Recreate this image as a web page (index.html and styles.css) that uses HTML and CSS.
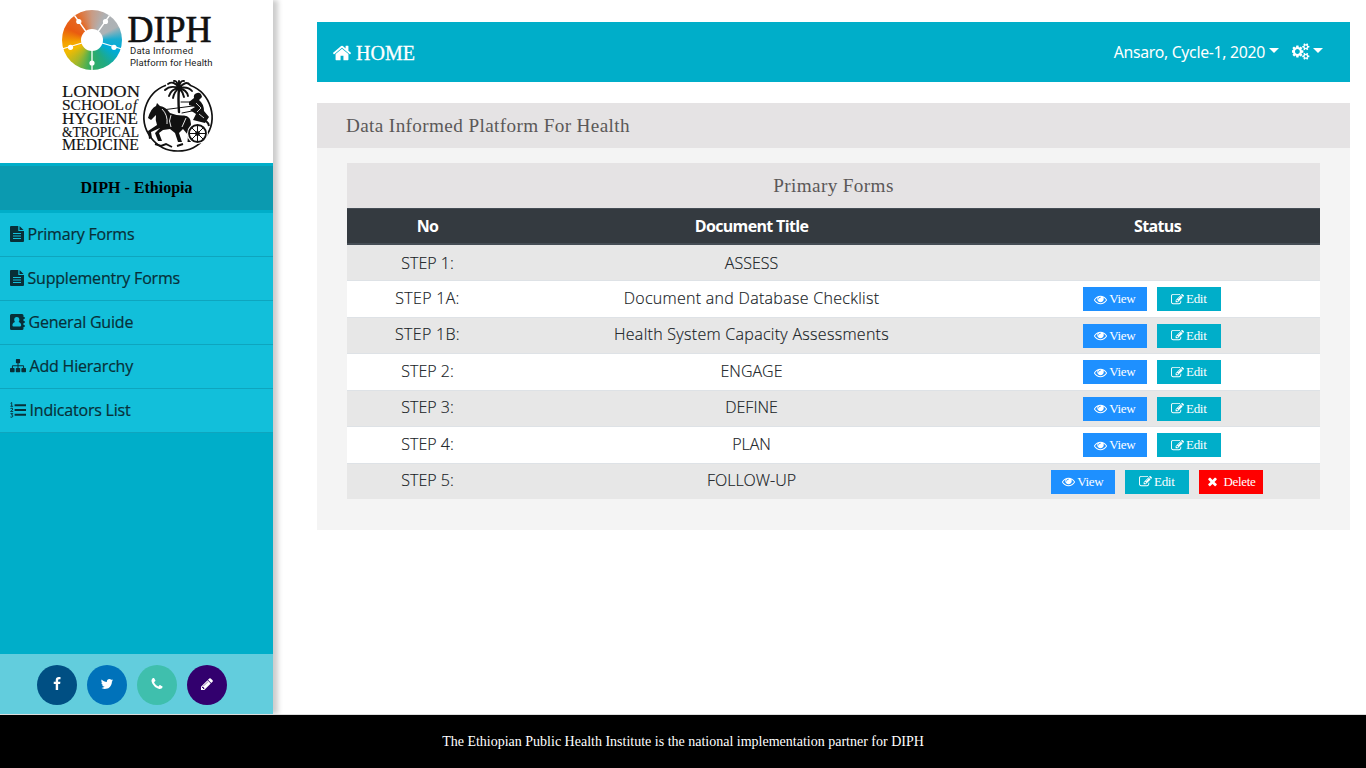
FILE: index.html
```
<!DOCTYPE html>
<html lang="en">
<head>
<meta charset="utf-8">
<title>DIPH - Ethiopia</title>
<link rel="stylesheet" href="styles.css">
</head>
<body>
<svg class="defs" width="0" height="0">
  <symbol id="eye" viewBox="0 0 1792 1792"><path d="M1664 960q-152-236-381-353 61 104 61 225 0 185-131.5 316.5t-316.5 131.5-316.5-131.5-131.5-316.5q0-121 61-225-229 117-381 353 133 205 333.5 326.5t434.5 121.5 434.5-121.5 333.5-326.5zm-720-384q0-20-14-34t-34-14q-125 0-214.5 89.5t-89.5 214.5q0 20 14 34t34 14 34-14 14-34q0-86 61-147t147-61q20 0 34-14t14-34zm848 384q0 34-20 69-140 230-376.5 368.5t-499.5 138.5-499.5-139-376.5-368q-20-35-20-69t20-69q140-229 376.5-368t499.5-139 499.5 139 376.5 368q20 35 20 69z"/></symbol>
  <symbol id="edit" viewBox="0 0 1792 1792"><path d="M888 1184l116-116-152-152-116 116v56h96v96h56zm440-720q-16-16-33 1l-350 350q-17 17-1 33t33-1l350-350q17-17 1-33zm80 594v190q0 119-84.5 203.5t-203.5 84.5h-832q-119 0-203.5-84.5t-84.5-203.5v-832q0-119 84.5-203.5t203.5-84.5h832q63 0 117 25 15 7 18 23 3 17-9 29l-49 49q-14 14-32 8-23-6-45-6h-832q-66 0-113 47t-47 113v832q0 66 47 113t113 47h832q66 0 113-47t47-113v-126q0-13 9-22l64-64q15-15 35-7t20 29zm-96-738l288 288-672 672h-288v-288zm444 132l-92 92-288-288 92-92q28-28 68-28t68 28l152 152q28 28 28 68t-28 68z"/></symbol>
  <symbol id="times" viewBox="0 0 1792 1792"><path d="M1490 1322q0 40-28 68l-136 136q-28 28-68 28t-68-28l-294-294-294 294q-28 28-68 28t-68-28l-136-136q-28-28-28-68t28-68l294-294-294-294q-28-28-28-68t28-68l136-136q28-28 68-28t68 28l294 294 294-294q28-28 68-28t68 28l136 136q28 28 28 68t-28 68l-294 294 294 294q28 28 28 68z"/></symbol>
  <symbol id="home" viewBox="0 0 1792 1792"><path d="M1472 992v480q0 26-19 45t-45 19h-384v-384h-256v384h-384q-26 0-45-19t-19-45v-480q0-1 .5-3t.5-3l575-474 575 474q1 2 1 6zm223-69l-62 74q-8 9-21 11h-3q-13 0-21-7l-692-577-692 577q-12 8-24 7-13-2-21-11l-62-74q-8-10-7-23.5t11-21.5l719-599q32-26 76-26t76 26l244 204v-195q0-14 9-23t23-9h192q14 0 23 9t9 23v408l219 182q10 8 11 21.5t-7 23.5z"/></symbol>
  <symbol id="facebook" viewBox="0 0 1792 1792"><path d="M1343 12v264h-157q-86 0-116 36t-30 108v189h293l-39 296h-254v759h-306v-759h-255v-296h255v-218q0-186 104-288.5t277-102.5q147 0 228 12z"/></symbol>
  <symbol id="twitter" viewBox="0 0 1792 1792"><path d="M1684 408q-67 98-162 167 1 14 1 42 0 130-38 259.5t-115.5 248.5-184.5 210.5-258 146-323 54.5q-271 0-496-145 35 4 78 4 225 0 401-138-105-2-188-64.5t-114-159.5q33 5 61 5 43 0 85-11-112-23-185.5-111.5t-73.5-205.5v-4q68 38 146 41-66-44-105-115t-39-154q0-88 44-163 121 149 294.5 238.5t371.5 99.5q-8-38-8-74 0-134 94.5-228.5t228.5-94.5q140 0 236 102 109-21 205-78-37 115-142 178 93-10 186-50z"/></symbol>
  <symbol id="phone" viewBox="0 0 1792 1792"><path d="M1600 1240q0 27-10 70.5t-21 68.5q-21 50-122 106-94 51-186 51-27 0-53-3.5t-57.5-12.5-47-14.5-55.5-20.5-49-18q-98-35-175-83-127-79-264-216t-216-264q-48-77-83-175-3-9-18-49t-20.5-55.5-14.5-47-12.5-57.5-3.5-53q0-92 51-186 56-101 106-122 25-11 68.5-21t70.5-10q14 0 21 3 18 6 53 76 11 19 30 54t35 63.5 31 53.5q3 4 17.5 25t21.5 35.5 7 28.5q0 20-28.5 50t-62 55-62 53-28.5 46q0 9 5 22.5t8.5 20.5 14 24 11.5 19q76 137 174 235t235 174q2 1 19 11.5t24 14 20.5 8.5 22.5 5q18 0 46-28.5t53-62 55-62 50-28.5q14 0 28.5 7t35.5 21.5 25 17.5q25 15 53.5 31t63.5 35 54 30q70 35 76 53 3 7 3 21z"/></symbol>
  <symbol id="pencil" viewBox="0 0 1792 1792"><path d="M491 1536l91-91-235-235-91 91v107h128v128h107zm523-928q0-22-22-22-10 0-17 7l-542 542q-7 7-7 17 0 22 22 22 10 0 17-7l542-542q7-7 7-17zm-54-192l416 416-832 832h-416v-416zm683 96q0 53-37 90l-166 166-416-416 166-165q36-38 90-38 53 0 91 38l235 234q37 39 37 91z"/></symbol>
  <symbol id="cogs" viewBox="0 0 1920 1792"><path d="M832 896q0-106-75-181t-181-75-181 75-75 181 75 181 181 75 181-75 75-181zm768 512q0-52-38-90t-90-38-90 38-38 90q0 53 37.5 90.5t90.500 37.500 90.500-37.500 37.500-90.500zm0-1024q0-52-38-90t-90-38-90 38-38 90q0 53 37.500 90.500t90.500 37.500 90.500-37.500 37.500-90.500zm-384 421v185q0 10-7 19.500t-16 10.500l-155 24q-11 35-32 76 34 48 90 115 7 11 7 20 0 12-7 19-23 30-82.500 89.500t-78.500 59.500q-11 0-21-7l-115-90q-37 19-77 31-11 108-23 155-7 24-30 24h-186q-11 0-20-7.500t-10-17.500l-23-153q-34-10-75-31l-118 89q-7 7-20 7-11 0-21-8-144-133-144-160 0-9 7-19 10-14 41-53t47-61q-23-44-35-82l-152-24q-10-1-17-9.500t-7-19.500v-185q0-10 7-19.500t16-10.500l155-24q11-35 32-76-34-48-90-115-7-11-7-20 0-12 7-20 22-30 82-89t79-59q11 0 21 7l115 90q34-18 77-32 11-108 23-154 7-24 30-24h186q11 0 20 7.500t10 17.500l23 153q34 10 75 31l118-89q8-7 20-7 11 0 21 8 144 133 144 160 0 8-7 19-12 16-42 54t-45 60q23 48 34 82l152 23q10 2 17 10.500t7 19.500zm640 533v140q0 16-149 31-12 27-30 52 51 113 51 138 0 4-4 7-122 71-124 71-8 0-46-47t-52-68q-20 2-30 2t-30-2q-14 21-52 68t-46 47q-2 0-124-71-4-3-4-7 0-25 51-138-18-25-30-52-149-15-149-31v-140q0-16 149-31 13-29 30-52-51-113-51-138 0-4 4-7 4-2 35-20t59-34 30-16q8 0 46 46.500t52 67.500q20-2 30-2t30 2q51-71 92-112l6-2q4 0 124 70 4 3 4 7 0 25-51 138 17 23 30 52 149 15 149 31zm0-1024v140q0 16-149 31-12 27-30 52 51 113 51 138 0 4-4 7-122 71-124 71-8 0-46-47t-52-68q-20 2-30 2t-30-2q-14 21-52 68t-46 47q-2 0-124-71-4-3-4-7 0-25 51-138-18-25-30-52-149-15-149-31v-140q0-16 149-31 13-29 30-52-51-113-51-138 0-4 4-7 4-2 35-20t59-34 30-16q8 0 46 46.500t52 67.500q20-2 30-2t30 2q51-71 92-112l6-2q4 0 124 70 4 3 4 7 0 25-51 138 17 23 30 52 149 15 149 31z"/></symbol>
  <symbol id="file" viewBox="0 0 14 16"><path fill-rule="evenodd" d="M1 0H8.300V5.100H14V15q0 1-1 1H1q-1 0-1-1V1Q0 0 1 0zM9.500.2q.5.200.8.500l3 3q.3.300.4.300H9.500zM3 7v1h8V7zM3 9.500v1h8v-1zM3 12v1h8v-1z"/></symbol>
  <symbol id="book" viewBox="0 0 15 16"><path fill-rule="evenodd" d="M1.500 0h10.500q1.500 0 1.500 1.500V3h1.200v2h-1.200v2h1.200v2h-1.200v2h1.200v2h-1.200v1.500Q13.500 16 12 16H1.500Q0 16 0 14.500v-13Q0 0 1.500 0zM6.800 3C5 3 4.200 4.200 4.200 5.700q0 1.400.8 2.300C3.300 8.300 2.400 9.700 2.400 11.300q0 1.300 1.200 1.300h6.400q1.200 0 1.200-1.300c0-1.600-.9-3-2.600-3.300q.8-.9.8-2.300C9.400 4.200 8.600 3 6.800 3z"/></symbol>
  <symbol id="sitemap" viewBox="0 0 16 14"><path d="M6.600 0h2.800q.7 0 .7.700v2.800q0 .7-.7.700h-.9v2H13q1.100 0 1.100 1.100v1.800h1.200q.7 0 .7.700v2.800q0 .7-.7.700h-3.200q-.7 0-.7-.7V9.800q0-.7.7-.7h1V7.200H8.500v1.900h1q.7 0 .7.700v2.800q0 .7-.7.700h-3q-.7 0-.7-.7V9.800q0-.7.7-.7h1V7.200H2.900v1.900h1q.7 0 .7.700v2.800q0 .7-.7.700H.7q-.7 0-.7-.7V9.800q0-.7.700-.7h1.200V7.300q0-1.100 1.100-1.100h4.500v-2h-.9q-.7 0-.7-.7V.7q0-.7.700-.7z"/></symbol>
  <symbol id="list" viewBox="0 0 16 16"><path d="M4.600 2.200H16v2H4.600zm0 4.800H16v2H4.600zm0 4.800H16v2H4.600z"/><path fill="none" stroke="currentColor" stroke-width=".9" d="M.6 1.300 1.700.5v3.700M.4 4.300h2.700M.5 6.500q2.300-1 2.300.5Q2.800 7.600.6 9.600h2.600M.5 11.600h2.300L1.500 13q1.500 0 1.400 1.100-.3 1.800-2.500.9"/></symbol>
</svg>

<div class="shell">
  <aside class="sidebar">
    <div class="logos">
      <svg viewBox="0 0 175 160" width="175" height="160">
        <foreignObject x="12" y="10" width="60" height="60"><div class="wheel"></div></foreignObject>
        <g stroke="#fff" stroke-width="1.300" fill="#fff">
          <path d="M42 40V70M42 40 12 49M42 40 72 49M42 40 24.500 15.500M42 40 59.500 15.500"/>
          <g stroke="none"><circle cx="42" cy="40" r="11"/><circle cx="42" cy="63" r="2.600"/><circle cx="20.500" cy="47.300" r="2.600"/><circle cx="64" cy="47.300" r="2.600"/><circle cx="28.800" cy="21.500" r="2.600"/><circle cx="55.500" cy="21.500" r="2.600"/></g>
        </g>
        <text x="77.500" y="41.500" class="serif diph" font-size="38" textLength="84" lengthAdjust="spacingAndGlyphs">DIPH</text>
        <text x="80" y="54" class="sans" font-size="9.500" textLength="63">Data Informed</text>
        <text x="80" y="66" class="sans" font-size="9.500" textLength="82.500">Platform for Health</text>
        <g class="serif">
          <text x="12" y="97" font-size="16" textLength="78" lengthAdjust="spacingAndGlyphs">LONDON</text>
          <text x="12" y="110" font-size="15" textLength="62" lengthAdjust="spacingAndGlyphs">SCHOOL</text>
          <text x="75" y="110" font-size="14" font-style="italic" textLength="12">of</text>
          <text x="12" y="124" font-size="16.500" textLength="76" lengthAdjust="spacingAndGlyphs">HYGIENE</text>
          <text x="12" y="137" font-size="14.500" textLength="77" lengthAdjust="spacingAndGlyphs">&amp;TROPICAL</text>
          <text x="12" y="150" font-size="16" textLength="77" lengthAdjust="spacingAndGlyphs">MEDICINE</text>
        </g>
        <path d="M140 85.200A34 34 0 1 1 116 85.200" fill="none" stroke="#111" stroke-width="1.700"/>
        <g fill="none" stroke="#111" stroke-width="1.900" stroke-linecap="round">
          <path d="M129 88Q124 80 118 84M129 88Q120 85 115 90M129 88Q121 89 119 96M129 88Q124 92 123 98M129 88Q127 80 124 81M129 88Q130 80 134 81M129 88Q136 80 140 85M129 88Q138 86 142 91M129 88Q137 90 138 96M129 88Q133 92 134 97M129 88V81"/>
          <path stroke-width="2.400" d="M129 89Q128 98 129 112"/>
          <path stroke-width="1" d="M131 102H142M112 110 143 106M132 113 147 110"/>
        </g>
        <path fill="#111" d="M98 118Q101 108 106 106L107 103 110 106Q116 107 120 113Q128 116 134 115.500Q141 116 141 124L140 131 142 134 141 142H137.500L138 135 133 129 129 133 132 142H128L125 133 120 129 113 130 109 133 112 141H108L105 133 110 128 101 132 102 138 99 139 98 131 107 125Q105 120 106 115L101 120Z"/>
        <path fill="none" stroke="#fff" stroke-width=".9" d="M112 109Q118 115 117 124M121 115Q118 121 121 127M136 118 132 127"/>
        <path fill="#111" d="M139 102 144 98Q143 94 147 93T152 97L149 100Q154 104 154 111L159 117 155 123 143 120 146 114 140 110 145 107 139 105Z"/>
        <path fill="none" stroke="#fff" stroke-width=".8" d="M146 103 151 108 147 112M149 114 154 118"/>
        <g stroke="#111" fill="none"><circle cx="147.500" cy="133.500" r="8" stroke="#fff" stroke-width="5"/><circle cx="147.500" cy="133.500" r="8.500" stroke-width="1.800"/><circle cx="147.500" cy="133.500" r="2"/><path d="M139 133.500H156M147.500 125V142M141.500 127.500 153.500 139.500M153.500 127.500 141.500 139.500" stroke-width="1"/><path d="M105 144 111 146 116 144 122 147M127 146 133 144M151 120Q158 120 159 126" stroke-width="1.900"/></g>
      </svg>
    </div>
    <div class="country">DIPH - Ethiopia</div>
    <nav class="menu">
      <a><svg width="14" height="16"><use href="#file"/></svg><span>Primary Forms</span></a>
      <a><svg width="14" height="16"><use href="#file"/></svg><span>Supplementry Forms</span></a>
      <a><svg width="15" height="16"><use href="#book"/></svg><span>General Guide</span></a>
      <a><svg width="16" height="14"><use href="#sitemap"/></svg><span>Add Hierarchy</span></a>
      <a><svg width="16" height="16"><use href="#list"/></svg><span>Indicators List</span></a>
    </nav>
    <div class="social">
      <a class="fb"><svg width="14" height="14"><use href="#facebook"/></svg></a>
      <a class="tw"><svg width="14" height="14"><use href="#twitter"/></svg></a>
      <a class="ph"><svg width="14" height="14"><use href="#phone"/></svg></a>
      <a class="pn"><svg width="14" height="14"><use href="#pencil"/></svg></a>
    </div>
  </aside>

  <main class="main">
    <header class="topbar">
      <div class="home"><svg width="20" height="20"><use href="#home"/></svg><span>HOME</span></div>
      <div class="tools">
        <span class="cycle">Ansaro, Cycle-1, 2020</span><i class="caret"></i>
        <svg class="gear" width="18" height="17"><use href="#cogs"/></svg><i class="caret caret-gear"></i>
      </div>
    </header>
    <section class="panel">
      <h1 class="panel-title">Data Informed Platform For Health</h1>
      <div class="panel-body">
        <h2 class="form-title">Primary Forms</h2>
        <div class="table">
          <div class="row head"><span>No</span><span>Document Title</span><span>Status</span></div>
          <div class="row first"><span>STEP 1:</span><span>ASSESS</span><span></span></div>
          <div class="row"><span class="sub">STEP 1A:</span><span class="long">Document and Database Checklist</span><div class="actions"><a class="btn view"><svg width="13" height="13"><use href="#eye"/></svg>View</a><a class="btn edit"><svg width="13" height="13"><use href="#edit"/></svg>Edit</a></div></div>
          <div class="row"><span class="sub">STEP 1B:</span><span class="long">Health System Capacity Assessments</span><div class="actions"><a class="btn view"><svg width="13" height="13"><use href="#eye"/></svg>View</a><a class="btn edit"><svg width="13" height="13"><use href="#edit"/></svg>Edit</a></div></div>
          <div class="row"><span>STEP 2:</span><span>ENGAGE</span><div class="actions"><a class="btn view"><svg width="13" height="13"><use href="#eye"/></svg>View</a><a class="btn edit"><svg width="13" height="13"><use href="#edit"/></svg>Edit</a></div></div>
          <div class="row"><span>STEP 3:</span><span>DEFINE</span><div class="actions"><a class="btn view"><svg width="13" height="13"><use href="#eye"/></svg>View</a><a class="btn edit"><svg width="13" height="13"><use href="#edit"/></svg>Edit</a></div></div>
          <div class="row"><span>STEP 4:</span><span>PLAN</span><div class="actions"><a class="btn view"><svg width="13" height="13"><use href="#eye"/></svg>View</a><a class="btn edit"><svg width="13" height="13"><use href="#edit"/></svg>Edit</a></div></div>
          <div class="row"><span>STEP 5:</span><span>FOLLOW-UP</span><div class="actions wide"><a class="btn view"><svg width="13" height="13"><use href="#eye"/></svg>View</a><a class="btn edit"><svg width="13" height="13"><use href="#edit"/></svg>Edit</a><a class="btn delete"><svg width="13" height="13"><use href="#times"/></svg>Delete</a></div></div>
        </div>
      </div>
    </section>
  </main>
</div>
<footer class="footer">The Ethiopian Public Health Institute is the national implementation partner for DIPH</footer>
</body>
</html>
```
FILE: styles.css
```
* { box-sizing: border-box; }
body { margin: 0; height: 768px; overflow: hidden; display: flex; flex-direction: column; background: #fff; font-family: "Open Sans", sans-serif; font-size: 16px; }
svg { display: block; fill: currentColor; flex: none; }
.defs { position: absolute; }
.shell { display: flex; height: 714px; overflow: hidden; }
.sidebar { width: 273px; height: 714px; background: #00aec9; display: flex; flex-direction: column; box-shadow: 5px 0 5px rgba(0,0,0,.2); }
.logos { height: 163px; background: #fff; padding-left: 50px; }
.serif { font-family: "Liberation Serif", serif; fill: #111; stroke: #111; stroke-width: .15px; }
.diph { stroke-width: .7px; }
.sans { font-family: Roboto, sans-serif; fill: #222; }
.wheel { width: 60px; height: 60px; border-radius: 50%; background: conic-gradient(#c89c86 0deg, #aeb1b4 28deg, #adb2b5 62deg, #18acd0 88deg, #00abd8 115deg, #20aa83 150deg, #35ad5e 185deg, #a5b829 215deg, #f5ba00 245deg, #f4a000 265deg, #e95b10 295deg, #e46b28 330deg, #c89c86 360deg); }
.country { height: 44px; margin: 3px 0; background: #0b9ab0; font: bold 16px/44px "Liberation Serif", serif; text-align: center; color: #000; }
.menu a { display: flex; align-items: center; gap: 4px; height: 44px; padding: 0 0 1px 10px; background: #12bfda; border-bottom: 1px solid #0ea5be; color: #082f38; letter-spacing: -.2px; -webkit-text-stroke: .2px #082f38; }
.menu span { margin: -1px 0 0 -.5px; }
.social { margin-top: auto; height: 60px; background: #62cddd; display: flex; align-items: center; gap: 10px; padding: 2px 0 0 37px; }
.social a { width: 40px; height: 40px; border-radius: 50%; display: flex; align-items: center; justify-content: center; color: #fff; padding-bottom: 2px; }
.fb { background: #004f83; }
.tw { background: #0072ba; }
.ph { background: #3fbfad; }
.pn { background: #32006e; }
.main { width: 1033px; margin: 22px 0 0 44px; }
.topbar { height: 60px; background: #00aec9; color: #fff; display: flex; justify-content: space-between; align-items: center; padding: 0 27px 0 15px; }
.home { display: flex; align-items: center; gap: 4px; font: 20px/24px "Liberation Serif", serif; padding-top: 2px; -webkit-text-stroke: .3px #fff; }
.home svg { margin-top: -1px; }
.tools { display: flex; align-items: center; }
.cycle { font: 15.800px/22px "Noto Sans", sans-serif; letter-spacing: -.3px; }
.caret { border: 5px solid transparent; border-top-color: #fff; border-bottom: 0; margin: 0 0 3px 4px; }
.gear { margin: 0 0 2px 13px; }
.caret-gear { margin: 0 0 4px 3px; }
.panel { margin-top: 21px; height: 427px; background: #f4f4f4; }
.panel-title, .form-title { margin: 0; height: 45px; background: #e5e3e4; color: #5b5858; font: 19.200px/45px "Liberation Serif", serif; letter-spacing: .37px; }
.panel-title { padding-left: 29px; }
.panel-body { padding: 15px 30px; }
.form-title { text-align: center; }
.row { display: grid; grid-template-columns: 161px 487px 325px; height: 36.500px; text-align: center; color: #151a1e; font-weight: 300; -webkit-text-stroke: .15px #151a1e; border-top: 1px solid #dee2e6; padding-top: 5.500px; line-height: 22px; background: #fff; }
.row:nth-child(even) { background: #e7e7e7; }
.row.head { height: 37px; background: #343a40; color: #fff; font-weight: 700; border-top: 1px solid #454d55; border-bottom: 2px solid #454d55; padding-top: 6px; letter-spacing: -.65px; -webkit-text-stroke: 0; }
.row.first { height: 35px; border: 0; padding-top: 7px; }
.sub { letter-spacing: .3px; }
.long { letter-spacing: .29px; }
.actions { display: flex; justify-content: center; gap: 10px; padding: .8px 12px 0 0; -webkit-text-stroke: 0; }
.actions.wide { padding-right: 2px; }
.btn { width: 64px; height: 24px; display: flex; align-items: center; justify-content: center; gap: 2.500px; color: #fff; font: 13px/24px "Liberation Serif", serif; letter-spacing: -.3px; }
.view { background: #1e90ff; }
.edit { background: #00aec9; }
.delete { background: #f00; gap: 4px; padding-left: 1px; }
.footer { height: 54px; background: #000; border-top: 1px solid #ddd; color: #fff; font: 14px/53px "Liberation Serif", serif; text-align: center; }
```
